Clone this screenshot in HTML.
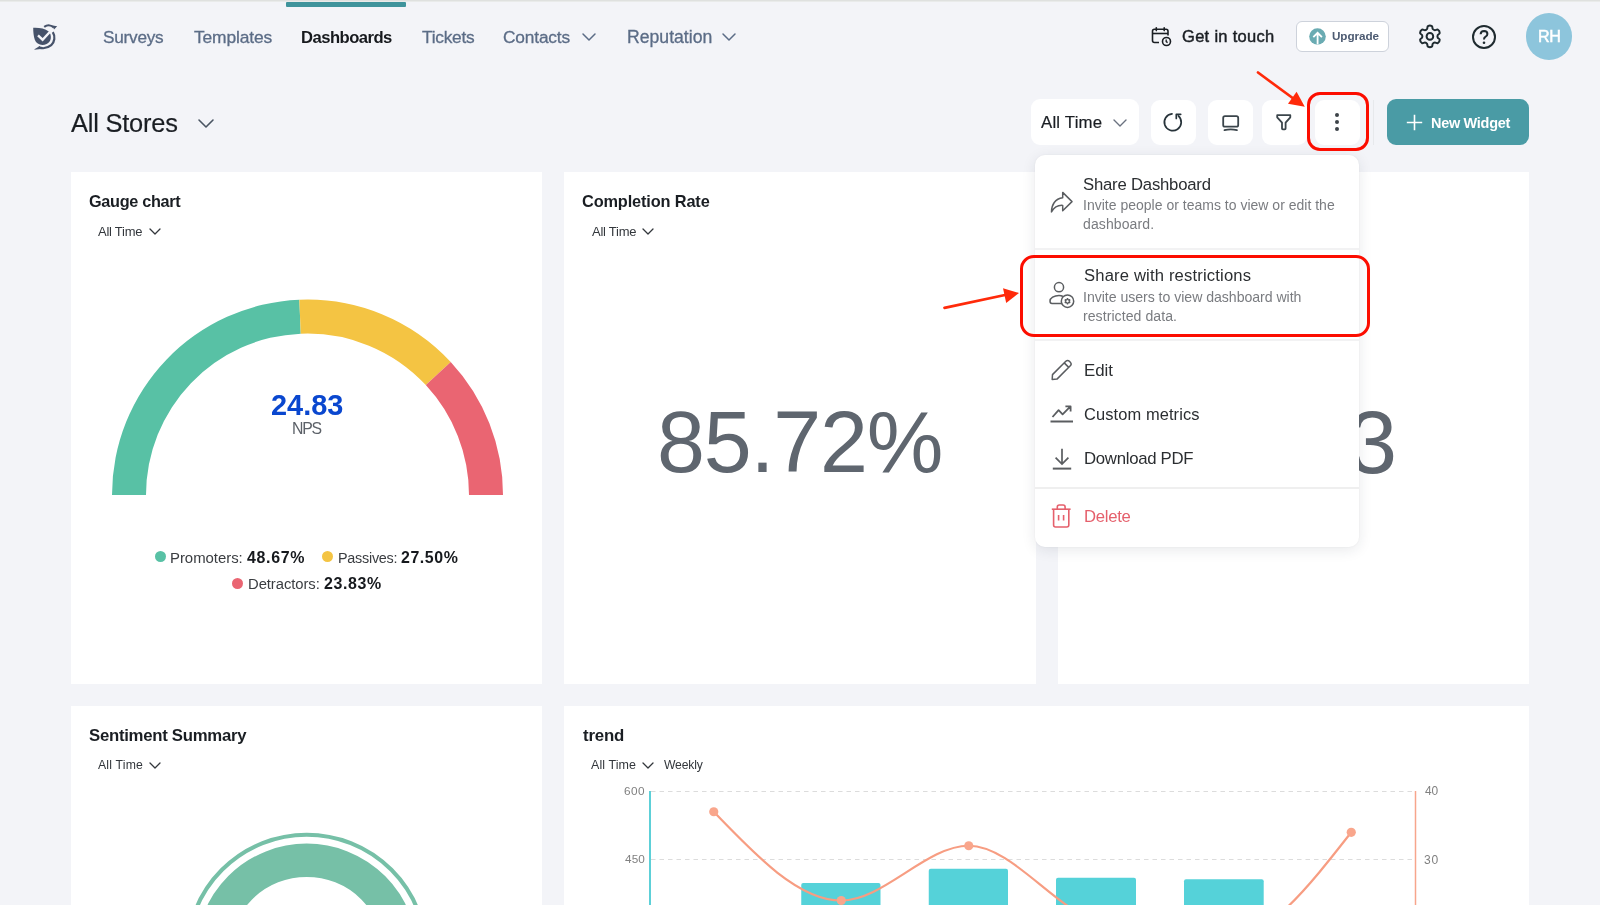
<!DOCTYPE html>
<html><head><meta charset="utf-8"><title>Dashboards</title>
<style>
html,body{margin:0;padding:0}
body{width:1600px;height:905px;overflow:hidden;background:#f3f4f8;position:relative;font-family:"Liberation Sans",sans-serif}
.t{position:absolute;white-space:pre;will-change:transform}
svg{overflow:visible}
</style></head><body>
<div style="position:absolute;left:0px;top:0px;width:1600px;height:1px;background:#dfe1df"></div>
<div style="position:absolute;left:0px;top:1px;width:1600px;height:1px;background:#e9ebea"></div>
<div style="position:absolute;left:286px;top:2px;width:120px;height:5px;background:#3f949c;border-radius:1px"></div>
<svg style="position:absolute;left:25px;top:15px;" width="40" height="40" viewBox="0 0 40 40"><path d="M8.2 12.8 C13.8 12.5 19.8 13.4 23.8 16.4 C27.2 20.4 26.4 26.8 21.6 29 C17 31 11.4 29.6 9.8 24.8 C8.6 21.2 8.2 17 8.2 12.8 Z" fill="#46526a"/><path d="M13.0 20.4 L17.6 24.7 L26.4 15.2" fill="none" stroke="#f3f4f8" stroke-width="2.4"/><path d="M19.2 11.9 C22.6 9.6 26.6 10.2 28.8 12.6" fill="none" stroke="#46526a" stroke-width="2.2"/><path d="M27.6 10.6 L32.2 11.2 L29.0 14.4 Z" fill="#46526a"/><path d="M27.8 17.2 C30.4 21.4 29.8 26.8 26.2 30.2 C22.6 33.2 17.6 33.8 13.6 32.4" fill="none" stroke="#46526a" stroke-width="2.2"/><path d="M14.8 31.0 L8.6 34.8 L15.4 34.0 Z" fill="#46526a"/></svg>
<div class="t" style="left:103px;top:28.8px;font-size:17.21px;line-height:17.21px;font-weight:400;color:#5b6c86;letter-spacing:-0.233px;-webkit-text-stroke:0.3px #5b6c86;">Surveys</div>
<div class="t" style="left:193.6px;top:28.8px;font-size:17.41px;line-height:17.41px;font-weight:400;color:#5b6c86;letter-spacing:-0.15px;-webkit-text-stroke:0.3px #5b6c86;">Templates</div>
<div class="t" style="left:300.9px;top:29.8px;font-size:16.62px;line-height:16.62px;font-weight:700;color:#16191d;letter-spacing:-0.522px;">Dashboards</div>
<div class="t" style="left:421.5px;top:28.8px;font-size:17.32px;line-height:17.32px;font-weight:400;color:#5b6c86;letter-spacing:-0.25px;-webkit-text-stroke:0.3px #5b6c86;">Tickets</div>
<div class="t" style="left:503.4px;top:28.8px;font-size:17.3px;line-height:17.3px;font-weight:400;color:#5b6c86;letter-spacing:-0.157px;-webkit-text-stroke:0.3px #5b6c86;">Contacts</div>
<div class="t" style="left:626.5px;top:28.8px;font-size:17.63px;line-height:17.63px;font-weight:400;color:#5b6c86;letter-spacing:0.011px;-webkit-text-stroke:0.3px #5b6c86;">Reputation</div>
<svg style="position:absolute;left:580.5px;top:32px;" width="16" height="10" viewBox="0 0 16 10"><polyline points="2,2 8.0,8 14,2" fill="none" stroke="#5b6c86" stroke-width="1.5" stroke-linecap="round" stroke-linejoin="round"/></svg>
<svg style="position:absolute;left:721px;top:32px;" width="16" height="10" viewBox="0 0 16 10"><polyline points="2,2 8.0,8 14,2" fill="none" stroke="#5b6c86" stroke-width="1.5" stroke-linecap="round" stroke-linejoin="round"/></svg>
<svg style="position:absolute;left:1151.3px;top:26.6px;" width="21" height="20" viewBox="0 0 21 20"><path d="M8 15.5 H3.5 Q1.5 15.5 1.5 13.5 V4.3 Q1.5 2.3 3.5 2.3 H15 Q17 2.3 17 4.3 V8.5" fill="none" stroke="#1a1e23" stroke-width="1.6"/><line x1="1.5" y1="6.5" x2="17" y2="6.5" stroke="#1a1e23" stroke-width="1.6"/><line x1="5.3" y1="0.8" x2="5.3" y2="3.6" stroke="#1a1e23" stroke-width="1.6" stroke-linecap="round"/><line x1="13.2" y1="0.8" x2="13.2" y2="3.6" stroke="#1a1e23" stroke-width="1.6" stroke-linecap="round"/><circle cx="15.5" cy="14.5" r="4" fill="#f3f4f8" stroke="#1a1e23" stroke-width="1.6"/><path d="M15.2 12.6 L15.2 14.6 L16.6 15.6" fill="none" stroke="#1a1e23" stroke-width="1.3"/></svg>
<div class="t" style="left:1181.6px;top:27.7px;font-size:16.51px;line-height:16.51px;font-weight:400;color:#1a1e23;letter-spacing:0.3px;-webkit-text-stroke:0.45px #1a1e23;">Get in touch</div>
<div style="position:absolute;left:1296px;top:21px;width:93px;height:30.5px;box-sizing:border-box;border:1.3px solid #cdd2db;border-radius:6px;background:#fff"></div>
<svg style="position:absolute;left:1308.5px;top:28px;" width="17" height="17" viewBox="0 0 17 17"><circle cx="8.5" cy="8.5" r="8.3" fill="#6aabb2"/><path d="M8.6 16.5 V4.8 M4.3 9.2 L8.6 4.8 L12.9 9.2" fill="none" stroke="#fff" stroke-width="1.8" stroke-linejoin="miter"/></svg>
<div class="t" style="left:1332.4px;top:30.4px;font-size:11.7px;line-height:11.7px;font-weight:700;color:#4d5b72;letter-spacing:-0.067px;">Upgrade</div>
<svg style="position:absolute;left:1418px;top:24px;" width="24" height="24" viewBox="0 0 24 24"><path d="M9.95 2.18 C10.75 1.71 13.05 1.71 13.85 2.18 C14.65 2.66 14.23 4.35 14.73 5.02 C15.23 5.70 16.03 6.16 16.87 6.26 C17.71 6.36 18.96 5.15 19.77 5.60 C20.58 6.06 21.73 8.05 21.72 8.98 C21.71 9.91 20.04 10.39 19.70 11.16 C19.37 11.94 19.37 12.86 19.70 13.64 C20.04 14.41 21.71 14.89 21.72 15.82 C21.73 16.75 20.58 18.74 19.77 19.20 C18.96 19.65 17.71 18.44 16.87 18.54 C16.03 18.64 15.23 19.10 14.73 19.78 C14.23 20.45 14.65 22.14 13.85 22.62 C13.05 23.09 10.75 23.09 9.95 22.62 C9.15 22.14 9.57 20.45 9.07 19.78 C8.57 19.10 7.77 18.64 6.93 18.54 C6.09 18.44 4.84 19.65 4.03 19.20 C3.22 18.74 2.07 16.75 2.08 15.82 C2.09 14.89 3.76 14.41 4.10 13.64 C4.43 12.86 4.43 11.94 4.10 11.16 C3.76 10.39 2.09 9.91 2.08 8.98 C2.07 8.05 3.22 6.06 4.03 5.60 C4.84 5.15 6.09 6.36 6.93 6.26 C7.77 6.16 8.57 5.70 9.07 5.02 C9.57 4.35 9.15 2.66 9.95 2.18 Z" fill="none" stroke="#1f2b30" stroke-width="2" stroke-linejoin="round"/><circle cx="11.9" cy="12.4" r="3.3" fill="none" stroke="#1f2b30" stroke-width="2"/></svg>
<svg style="position:absolute;left:1472px;top:24.5px;" width="24" height="24" viewBox="0 0 24 24"><circle cx="12" cy="12" r="11" fill="none" stroke="#1f2b30" stroke-width="2"/><path d="M8.6 9.3 Q8.8 6 12.1 6 Q15.4 6.1 15.4 9.1 Q15.4 11 13.4 11.9 Q12 12.6 12 14.5" fill="none" stroke="#1f2b30" stroke-width="2"/><circle cx="12" cy="17.8" r="1.3" fill="#1f2b30"/></svg>
<div style="position:absolute;left:1525.8px;top:13.3px;width:46.6px;height:46.6px;border-radius:50%;background:#8dc5dc"></div>
<div class="t" style="left:1537.8px;top:27.9px;font-size:16.12px;line-height:16.12px;font-weight:400;color:#ffffff;letter-spacing:-0.5px;-webkit-text-stroke:0.5px #ffffff;">RH</div>
<div class="t" style="left:71.2px;top:111px;font-size:25.42px;line-height:25.42px;font-weight:400;color:#1a1e23;letter-spacing:-0.2px;-webkit-text-stroke:0.2px #1a1e23;">All Stores</div>
<svg style="position:absolute;left:197px;top:117.5px;" width="18" height="11" viewBox="0 0 18 11"><polyline points="2,2 9.0,9 16,2" fill="none" stroke="#4a5563" stroke-width="1.6" stroke-linecap="round" stroke-linejoin="round"/></svg>
<div style="position:absolute;left:1031px;top:99px;width:108px;height:46px;background:#fff;border-radius:9px"></div>
<div class="t" style="left:1040.8px;top:115px;font-size:16.79px;line-height:16.79px;font-weight:400;color:#1a1e23;letter-spacing:0.2px;-webkit-text-stroke:0.2px #1a1e23;">All Time</div>
<svg style="position:absolute;left:1112px;top:117.5px;" width="16" height="10" viewBox="0 0 16 10"><polyline points="2,2 8.0,8 14,2" fill="none" stroke="#6b7280" stroke-width="1.4" stroke-linecap="round" stroke-linejoin="round"/></svg>
<div style="position:absolute;left:1151px;top:100px;width:44.5px;height:45px;background:#fff;border-radius:9px"></div>
<div style="position:absolute;left:1208px;top:100px;width:44.5px;height:45px;background:#fff;border-radius:9px"></div>
<div style="position:absolute;left:1262px;top:100px;width:44.5px;height:45px;background:#fff;border-radius:9px"></div>
<div style="position:absolute;left:1315px;top:100px;width:44.5px;height:45px;background:#fff;border-radius:9px"></div>
<svg style="position:absolute;left:1158px;top:106px;" width="30" height="30" viewBox="0 0 30 30"><path d="M14.0 7.8 A8.45 8.45 0 1 0 20.4 9.9" fill="none" stroke="#27333a" stroke-width="1.7" stroke-linecap="round"/><path d="M18.3 12.5 L18.3 8.3 L22.7 8.3" fill="none" stroke="#27333a" stroke-width="1.7" stroke-linecap="round" stroke-linejoin="round"/></svg>
<svg style="position:absolute;left:1221.5px;top:114.5px;" width="18" height="17" viewBox="0 0 18 17"><rect x="1.2" y="1.2" width="15" height="10.5" rx="1.8" fill="none" stroke="#3b454b" stroke-width="1.8"/><path d="M2.5 15.2 Q8.7 13.4 14.9 15.2" fill="none" stroke="#3b454b" stroke-width="1.8" stroke-linecap="round"/></svg>
<svg style="position:absolute;left:1275.5px;top:114px;" width="16" height="17" viewBox="0 0 16 17"><path d="M1.2 1.2 H14.3 V3.3 L9.6 8.6 V14.6 Q9.6 15.4 8.8 15.4 H6.8 Q6 15.4 6 14.6 V8.6 L1.2 3.3 Z" fill="none" stroke="#3b454b" stroke-width="1.8" stroke-linejoin="round"/></svg>
<div style="position:absolute;left:1335px;top:113.1px;width:4.4px;height:4.4px;border-radius:50%;background:#3d4348"></div>
<div style="position:absolute;left:1335px;top:120.0px;width:4.4px;height:4.4px;border-radius:50%;background:#3d4348"></div>
<div style="position:absolute;left:1335px;top:126.89999999999999px;width:4.4px;height:4.4px;border-radius:50%;background:#3d4348"></div>
<div style="position:absolute;left:1372.5px;top:100px;width:1.5px;height:45px;background:#e7e9ec"></div>
<div style="position:absolute;left:1387px;top:99px;width:142px;height:46px;background:#4a9ba5;border-radius:9px"></div>
<svg style="position:absolute;left:1405.5px;top:114px;" width="17" height="17" viewBox="0 0 17 17"><path d="M8.5 0.8 V16.2 M0.8 8.5 H16.2" stroke="#fff" stroke-width="1.6"/></svg>
<div class="t" style="left:1430.6px;top:115.8px;font-size:14.48px;line-height:14.48px;font-weight:700;color:#ffffff;letter-spacing:-0.289px;">New Widget</div>
<div style="position:absolute;left:71px;top:172px;width:471px;height:512px;background:#fff"></div>
<div style="position:absolute;left:564px;top:172px;width:472px;height:512px;background:#fff"></div>
<div style="position:absolute;left:1058px;top:172px;width:471px;height:512px;background:#fff"></div>
<div style="position:absolute;left:71px;top:706px;width:471px;height:220px;background:#fff"></div>
<div style="position:absolute;left:564px;top:706px;width:965px;height:220px;background:#fff"></div>
<div class="t" style="left:88.6px;top:192.9px;font-size:16.26px;line-height:16.26px;font-weight:700;color:#1a1e23;letter-spacing:-0.31px;">Gauge chart</div>
<div class="t" style="left:98px;top:225.8px;font-size:12.97px;line-height:12.97px;font-weight:400;color:#33373c;letter-spacing:-0.243px;">All Time</div>
<svg style="position:absolute;left:147.5px;top:226.8px;" width="14" height="9" viewBox="0 0 14 9"><polyline points="2,2 7.0,7 12,2" fill="none" stroke="#33373c" stroke-width="1.3" stroke-linecap="round" stroke-linejoin="round"/></svg>
<svg style="position:absolute;left:0px;top:0px;pointer-events:none" width="1600" height="905" viewBox="0 0 1600 905"><path d="M112.00 495.00 A195.5 195.5 0 0 1 299.33 299.67 L300.75 333.64 A161.5 161.5 0 0 0 146.00 495.00 Z" fill="#58c1a5"/><path d="M299.33 299.67 A195.5 195.5 0 0 1 450.73 361.93 L425.82 385.08 A161.5 161.5 0 0 0 300.75 333.64 Z" fill="#f4c443"/><path d="M450.73 361.93 A195.5 195.5 0 0 1 503.00 495.00 L469.00 495.00 A161.5 161.5 0 0 0 425.82 385.08 Z" fill="#ea6572"/></svg>
<div class="t" style="left:270.5px;top:390.8px;font-size:28.91px;line-height:28.91px;font-weight:700;color:#0a47cf;letter-spacing:0.0px;">24.83</div>
<div class="t" style="left:291.9px;top:420.9px;font-size:15.83px;line-height:15.83px;font-weight:400;color:#5c6168;letter-spacing:-1.25px;">NPS</div>
<div style="position:absolute;left:154.6px;top:551.2px;width:11px;height:11px;border-radius:50%;background:#58c1a5"></div>
<div style="position:absolute;left:322.3px;top:551.3px;width:11px;height:11px;border-radius:50%;background:#f4c443"></div>
<div style="position:absolute;left:231.9px;top:578.3px;width:11px;height:11px;border-radius:50%;background:#ea6572"></div>
<div class="t" style="left:170px;top:550.5px;font-size:14.95px;line-height:14.95px;font-weight:400;color:#3a3d41;letter-spacing:-0.033px;">Promoters:</div>
<div class="t" style="left:247px;top:549.5px;font-size:15.97px;line-height:15.97px;font-weight:700;color:#16191d;letter-spacing:0.68px;">48.67%</div>
<div class="t" style="left:338px;top:550.5px;font-size:14.39px;line-height:14.39px;font-weight:400;color:#3a3d41;letter-spacing:-0.25px;">Passives:</div>
<div class="t" style="left:401.2px;top:549.5px;font-size:15.93px;line-height:15.93px;font-weight:700;color:#16191d;letter-spacing:0.56px;">27.50%</div>
<div class="t" style="left:247.6px;top:577.1px;font-size:14.82px;line-height:14.82px;font-weight:400;color:#3a3d41;letter-spacing:-0.06px;">Detractors:</div>
<div class="t" style="left:324px;top:576.1px;font-size:15.96px;line-height:15.96px;font-weight:700;color:#16191d;letter-spacing:0.6px;">23.83%</div>
<div class="t" style="left:582px;top:193px;font-size:16.34px;line-height:16.34px;font-weight:700;color:#1a1e23;letter-spacing:-0.143px;">Completion Rate</div>
<div class="t" style="left:591.5px;top:225.8px;font-size:12.97px;line-height:12.97px;font-weight:400;color:#33373c;letter-spacing:-0.243px;">All Time</div>
<svg style="position:absolute;left:641px;top:226.8px;" width="14" height="9" viewBox="0 0 14 9"><polyline points="2,2 7.0,7 12,2" fill="none" stroke="#33373c" stroke-width="1.3" stroke-linecap="round" stroke-linejoin="round"/></svg>
<div class="t" style="left:657px;top:399px;font-size:86.2px;line-height:86.2px;font-weight:400;color:#5f666f;letter-spacing:-1.2px;">85.72%</div>
<div class="t" style="left:1348px;top:399px;font-size:88.25px;line-height:88.25px;font-weight:400;color:#5f666f;letter-spacing:0px;">3</div>
<div class="t" style="left:88.9px;top:727.9px;font-size:16.75px;line-height:16.75px;font-weight:700;color:#1a1e23;letter-spacing:-0.275px;">Sentiment Summary</div>
<div class="t" style="left:98px;top:758.8px;font-size:12.24px;line-height:12.24px;font-weight:400;color:#33373c;letter-spacing:0.186px;">All Time</div>
<svg style="position:absolute;left:147.5px;top:760.5px;" width="14" height="9" viewBox="0 0 14 9"><polyline points="2,2 7.0,7 12,2" fill="none" stroke="#33373c" stroke-width="1.3" stroke-linecap="round" stroke-linejoin="round"/></svg>
<svg style="position:absolute;left:0px;top:0px;" width="1600" height="905" viewBox="0 0 1600 905"><circle cx="306.7" cy="954.5" r="119.8" fill="none" stroke="#76c0a7" stroke-width="4"/><circle cx="306.7" cy="954.5" r="94.25" fill="none" stroke="#76c0a7" stroke-width="33.3"/></svg>
<div class="t" style="left:582.8px;top:727.8px;font-size:16.82px;line-height:16.82px;font-weight:700;color:#1a1e23;letter-spacing:-0.2px;">trend</div>
<div class="t" style="left:591px;top:759px;font-size:12.5px;line-height:12.5px;font-weight:400;color:#33373c;letter-spacing:0.071px;">All Time</div>
<svg style="position:absolute;left:641px;top:760.5px;" width="14" height="9" viewBox="0 0 14 9"><polyline points="2,2 7.0,7 12,2" fill="none" stroke="#33373c" stroke-width="1.3" stroke-linecap="round" stroke-linejoin="round"/></svg>
<div class="t" style="left:664px;top:759px;font-size:12.17px;line-height:12.17px;font-weight:400;color:#33373c;letter-spacing:-0.16px;">Weekly</div>
<div class="t" style="left:624px;top:786px;font-size:11.81px;line-height:11.81px;font-weight:400;color:#808080;letter-spacing:0.5px;">600</div>
<div class="t" style="left:624.5px;top:853.2px;font-size:11.77px;line-height:11.77px;font-weight:400;color:#808080;letter-spacing:0.125px;">450</div>
<div class="t" style="left:1424.7px;top:786.2px;font-size:11.93px;line-height:11.93px;font-weight:400;color:#808080;letter-spacing:-0.1px;">40</div>
<div class="t" style="left:1423.7px;top:853.5px;font-size:12.05px;line-height:12.05px;font-weight:400;color:#808080;letter-spacing:0.9px;">30</div>
<svg style="position:absolute;left:0px;top:0px;" width="1600" height="905" viewBox="0 0 1600 905"><line x1="651" y1="791.5" x2="1415" y2="791.5" stroke="#dcdcdc" stroke-width="1.2" stroke-dasharray="4.5 4"/><line x1="651" y1="859.5" x2="1415" y2="859.5" stroke="#dcdcdc" stroke-width="1.2" stroke-dasharray="4.5 4"/><line x1="650" y1="791" x2="650" y2="905" stroke="#5dd0d8" stroke-width="2"/><line x1="1415.5" y1="791" x2="1415.5" y2="905" stroke="#f7a58c" stroke-width="1.5"/><rect x="801.25" y="883" width="79.25" height="60" rx="2" fill="#55d2d9"/><rect x="928.75" y="868.75" width="79.25" height="60" rx="2" fill="#55d2d9"/><rect x="1056" y="877.75" width="80" height="60" rx="2" fill="#55d2d9"/><rect x="1184" y="879.2" width="79.70000000000005" height="60" rx="2" fill="#55d2d9"/><path d="M713.75 811.75 C756.25 856.12 798.75 900.50 841.25 900.5 C883.75 900.50 926.25 845.75 968.75 845.75 C1011.25 845.75 1053.75 907.67 1096.25 921.0 C1138.75 934.33 1181.25 941.00 1223.75 941.0 C1266.25 941.00 1308.75 886.65 1351.25 832.3" fill="none" stroke="#f79d82" stroke-width="2.2"/><circle cx="713.75" cy="811.75" r="4.6" fill="#f9a68c"/><circle cx="841.25" cy="900.5" r="4.6" fill="#f9a68c"/><circle cx="968.75" cy="845.75" r="4.6" fill="#f9a68c"/><circle cx="1351.25" cy="832.3" r="4.6" fill="#f9a68c"/></svg>
<div style="position:absolute;left:1035px;top:154.5px;width:324px;height:392.5px;background:#fff;border-radius:10px;box-shadow:0 3px 14px rgba(30,40,60,0.10), 0 0 3px rgba(30,40,60,0.05)"></div>
<div style="position:absolute;left:1035px;top:248px;width:324px;height:2px;background:#f2f2f3"></div>
<div style="position:absolute;left:1035px;top:339px;width:324px;height:2px;background:#f2f2f3"></div>
<div style="position:absolute;left:1035px;top:487px;width:324px;height:1.5px;background:#efefef"></div>
<svg style="position:absolute;left:1045px;top:186px;" width="32" height="32" viewBox="0 0 32 32"><path d="M17.7 6.4 L27 15.6 L17.7 24.7 V19.4 C13 19.1 9 21.4 6.5 25.9 C6.4 18.8 10.2 12.6 17.7 11.7 Z" fill="none" stroke="#5a5d60" stroke-width="1.5" stroke-linejoin="round"/></svg>
<div class="t" style="left:1083.4px;top:176.75px;font-size:16.69px;line-height:16.69px;font-weight:400;color:#2b2e31;letter-spacing:-0.2px;">Share Dashboard</div>
<div class="t" style="left:1083.4px;top:197.5px;font-size:13.99px;line-height:13.99px;font-weight:400;color:#7a7c80;letter-spacing:0.015px;">Invite people or teams to view or edit the</div>
<div class="t" style="left:1083.4px;top:217px;font-size:14.03px;line-height:14.03px;font-weight:400;color:#7a7c80;letter-spacing:0.1px;">dashboard.</div>
<svg style="position:absolute;left:1048.5px;top:281px;" width="26" height="28" viewBox="0 0 26 28"><circle cx="10" cy="6.2" r="4.6" fill="none" stroke="#5a5d60" stroke-width="1.5"/><path d="M14 15.5 C12.8 14.8 11.4 14.5 10 14.5 C5 14.5 1 17 1 20 Q1 22.5 3 22.5 H14.5" fill="none" stroke="#5a5d60" stroke-width="1.5"/><circle cx="18.5" cy="20.2" r="6.2" fill="#fff" stroke="#5a5d60" stroke-width="1.5"/><path d="M18.15 17.52 L18.85 17.52 L19.11 18.72 L19.47 18.93 L20.64 18.56 L20.99 19.17 L20.09 19.99 L20.09 20.41 L20.99 21.23 L20.64 21.84 L19.47 21.47 L19.11 21.68 L18.85 22.88 L18.15 22.88 L17.89 21.68 L17.53 21.47 L16.36 21.84 L16.01 21.23 L16.91 20.41 L16.91 19.99 L16.01 19.17 L16.36 18.56 L17.53 18.93 L17.89 18.72 Z" fill="none" stroke="#5a5d60" stroke-width="1.1" stroke-linejoin="round"/></svg>
<div class="t" style="left:1083.75px;top:268.4px;font-size:16.61px;line-height:16.61px;font-weight:400;color:#2b2e31;letter-spacing:0.166px;">Share with restrictions</div>
<div class="t" style="left:1083.4px;top:289.6px;font-size:14.13px;line-height:14.13px;font-weight:400;color:#7a7c80;letter-spacing:-0.041px;">Invite users to view dashboard with</div>
<div class="t" style="left:1083.4px;top:309.3px;font-size:14.07px;line-height:14.07px;font-weight:400;color:#7a7c80;letter-spacing:0.06px;">restricted data.</div>
<svg style="position:absolute;left:1049.5px;top:357.5px;" width="23" height="23.5" viewBox="0 0 23 23.5"><path d="M2.2 21.5 L2.5 16.6 L15.8 3.3 Q17.6 1.5 19.4 3.3 L20.3 4.2 Q22.1 6 20.3 7.8 L7 21.1 Z" fill="none" stroke="#5a5d60" stroke-width="1.5" stroke-linejoin="round"/><path d="M14.2 4.9 L18.7 9.4" stroke="#5a5d60" stroke-width="1.5"/></svg>
<div class="t" style="left:1084px;top:362.9px;font-size:16.87px;line-height:16.87px;font-weight:400;color:#2b2e31;letter-spacing:0.0px;">Edit</div>
<svg style="position:absolute;left:1050px;top:403.5px;" width="24" height="19" viewBox="0 0 24 19"><path d="M2.5 13 L8.6 6.2 L12.6 10.3 L20.2 2.6 M15.4 2.4 H20.6 V7.6" fill="none" stroke="#5a5d60" stroke-width="1.8" stroke-linejoin="round"/><line x1="0.5" y1="17.5" x2="23" y2="17.5" stroke="#5a5d60" stroke-width="2"/></svg>
<div class="t" style="left:1084px;top:405.6px;font-size:16.44px;line-height:16.44px;font-weight:400;color:#2b2e31;letter-spacing:0.1px;">Custom metrics</div>
<svg style="position:absolute;left:1052px;top:447.5px;" width="20" height="22" viewBox="0 0 20 22"><path d="M10 0.8 V16 M3.6 9.6 L10 16 L16.4 9.6" fill="none" stroke="#5a5d60" stroke-width="1.7"/><line x1="0.8" y1="20.6" x2="19.2" y2="20.6" stroke="#5a5d60" stroke-width="2"/></svg>
<div class="t" style="left:1084px;top:451.3px;font-size:16.77px;line-height:16.77px;font-weight:400;color:#2b2e31;letter-spacing:-0.291px;">Download PDF</div>
<svg style="position:absolute;left:1051px;top:504px;" width="21" height="24" viewBox="0 0 21 24"><path d="M0.8 5.2 H19.6" stroke="#e5606c" stroke-width="1.6"/><path d="M6.3 5 V3 Q6.3 1 8.3 1 H12.1 Q14.1 1 14.1 3 V5" fill="none" stroke="#e5606c" stroke-width="1.6"/><path d="M2.6 5.2 V21 Q2.6 23 4.6 23 H15.8 Q17.8 23 17.8 21 V5.2" fill="none" stroke="#e5606c" stroke-width="1.6"/><path d="M7.6 11 V16.6 M12.6 11 V16.6" stroke="#e5606c" stroke-width="1.6"/></svg>
<div class="t" style="left:1084.4px;top:509.4px;font-size:16.71px;line-height:16.71px;font-weight:400;color:#e5606c;letter-spacing:-0.28px;">Delete</div>
<div style="position:absolute;left:1020px;top:254.5px;width:350px;height:82px;box-sizing:border-box;border:3px solid #fc0d00;border-radius:14px"></div>
<div style="position:absolute;left:1307px;top:91.6px;width:61.6px;height:59.6px;box-sizing:border-box;border:3px solid #fc0d00;border-radius:13px"></div>
<svg style="position:absolute;left:0px;top:0px;" width="1600" height="905" viewBox="0 0 1600 905"><line x1="1258" y1="72.5" x2="1294" y2="99" stroke="#ff2a0a" stroke-width="2.7" stroke-linecap="round"/><polygon points="1304.8,106.8 1296.6,91.8 1288,103.8" fill="#ff2a0a"/><line x1="944.5" y1="307.8" x2="1005" y2="295" stroke="#ff2a0a" stroke-width="2.8" stroke-linecap="round"/><polygon points="1019,293 1003,288.3 1006.2,303" fill="#ff2a0a"/></svg>
</body></html>
